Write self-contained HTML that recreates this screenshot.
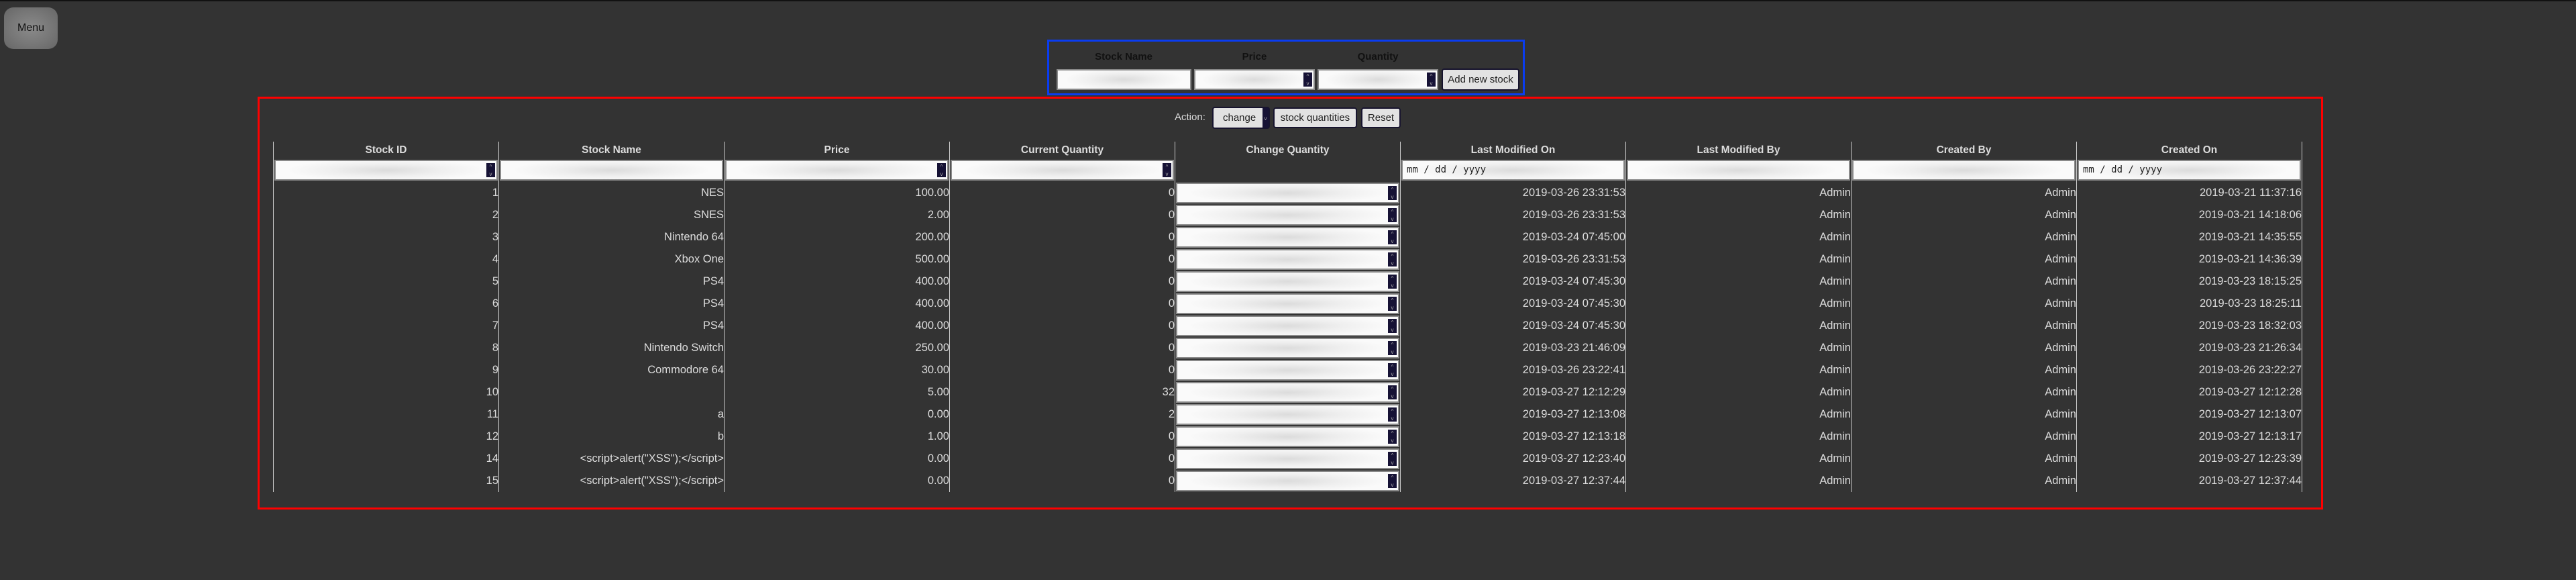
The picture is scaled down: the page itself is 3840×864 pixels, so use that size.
<!DOCTYPE html>
<html><head><meta charset="utf-8"><style>
html,body{margin:0;padding:0;}
body{width:3840px;height:864px;background:#333;position:relative;overflow:hidden;font-family:"Liberation Sans",sans-serif;border-top:2px solid #111;box-sizing:border-box;}
.abs{position:absolute;}
.menu{left:6px;top:9px;width:80px;height:62px;border-radius:14px;background:radial-gradient(ellipse at center,#8a8a8a 0%,#777 55%,#666 100%);color:#111;font-size:16px;display:flex;align-items:center;justify-content:center;}
.blue{left:1561px;top:57px;width:706px;height:77px;border:3px solid #0a3cf0;}
.red{left:384px;top:142px;width:3073px;height:609px;border:3px solid #f00;}
.lbl{color:#111;font-weight:bold;font-size:15px;text-align:center;}
.inp{box-sizing:border-box;border:2px solid #8a8a8a;background:radial-gradient(ellipse 45% 60% at 50% 50%,#dcdcdc 0%,#efefef 55%,#fafafa 100%);}
.spin{position:absolute;right:2px;top:3px;bottom:3px;width:13px;background:#161235;color:#aaa;font-size:8px;line-height:11px;text-align:center;}
.btn{box-sizing:border-box;background:#e2e2e2;border:2px solid #17142e;border-radius:4px;color:#222;font-size:15px;display:flex;align-items:center;justify-content:center;}
table{position:absolute;left:407px;top:209px;border-collapse:collapse;table-layout:fixed;width:3025px;}
col{width:336px;}
td,th{border-left:1px solid #ccc;padding:0;color:#ddd;font-size:16.5px;overflow:hidden;}
tr>*:last-child{border-right:1px solid #ccc;}
th{height:26px;font-weight:bold;font-size:15.5px;color:#ddd;text-align:center;vertical-align:middle;}
tr.f td{height:34px;position:relative;}
tr.f .inp{position:absolute;left:1px;right:1px;top:1px;height:31px;}
tr.d td{height:33px;text-align:right;position:relative;white-space:nowrap;}
tr.d td.c .inp{position:absolute;left:1px;right:1px;top:1px;height:31px;}
.date{font-family:"DejaVu Sans Mono","Liberation Mono",monospace;font-size:14px;color:#222;padding-left:6px;line-height:27px;}
</style></head><body>
<div class="abs menu">Menu</div>

<div class="abs blue"></div>
<div class="abs lbl" style="left:1575px;top:74px;width:200px;">Stock Name</div>
<div class="abs lbl" style="left:1780px;top:74px;width:180px;">Price</div>
<div class="abs lbl" style="left:1964px;top:74px;width:180px;">Quantity</div>
<div class="abs inp" style="left:1575px;top:101px;width:201px;height:31px;"></div>
<div class="abs inp" style="left:1780px;top:101px;width:180px;height:31px;"><div class="spin">^<br>v</div></div>
<div class="abs inp" style="left:1964px;top:101px;width:180px;height:31px;"><div class="spin">^<br>v</div></div>
<div class="abs btn" style="left:2149px;top:100px;width:116px;height:33px;">Add new stock</div>

<div class="abs red"></div>
<div class="abs" style="left:1751px;top:164px;color:#ddd;font-size:15px;">Action:</div>
<div class="abs btn" style="left:1807px;top:157px;width:86px;height:33px;justify-content:flex-start;padding-left:14px;">change<div style="position:absolute;right:0;top:0;bottom:0;width:9px;background:#161235;color:#aaa;font-size:8px;line-height:31px;text-align:center;">v</div></div>
<div class="abs btn" style="left:1898px;top:158px;width:125px;height:31px;">stock quantities</div>
<div class="abs btn" style="left:2029px;top:158px;width:59px;height:31px;">Reset</div>

<table>
<colgroup><col><col><col><col><col><col><col><col><col></colgroup>
<tr><th>Stock ID</th><th>Stock Name</th><th>Price</th><th>Current Quantity</th><th>Change Quantity</th><th>Last Modified On</th><th>Last Modified By</th><th>Created By</th><th>Created On</th></tr>
<tr class="f">
<td><div class="inp"><div class="spin">^<br>v</div></div></td>
<td><div class="inp"></div></td>
<td><div class="inp"><div class="spin">^<br>v</div></div></td>
<td><div class="inp"><div class="spin">^<br>v</div></div></td>
<td></td>
<td><div class="inp date">mm / dd / yyyy</div></td>
<td><div class="inp"></div></td>
<td><div class="inp"></div></td>
<td><div class="inp date">mm / dd / yyyy</div></td>
</tr>
<tr class="d"><td>1</td><td>NES</td><td>100.00</td><td>0</td><td class="c"><div class="inp"><div class="spin">^<br>v</div></div></td><td>2019-03-26 23:31:53</td><td>Admin</td><td>Admin</td><td>2019-03-21 11:37:16</td></tr>
<tr class="d"><td>2</td><td>SNES</td><td>2.00</td><td>0</td><td class="c"><div class="inp"><div class="spin">^<br>v</div></div></td><td>2019-03-26 23:31:53</td><td>Admin</td><td>Admin</td><td>2019-03-21 14:18:06</td></tr>
<tr class="d"><td>3</td><td>Nintendo 64</td><td>200.00</td><td>0</td><td class="c"><div class="inp"><div class="spin">^<br>v</div></div></td><td>2019-03-24 07:45:00</td><td>Admin</td><td>Admin</td><td>2019-03-21 14:35:55</td></tr>
<tr class="d"><td>4</td><td>Xbox One</td><td>500.00</td><td>0</td><td class="c"><div class="inp"><div class="spin">^<br>v</div></div></td><td>2019-03-26 23:31:53</td><td>Admin</td><td>Admin</td><td>2019-03-21 14:36:39</td></tr>
<tr class="d"><td>5</td><td>PS4</td><td>400.00</td><td>0</td><td class="c"><div class="inp"><div class="spin">^<br>v</div></div></td><td>2019-03-24 07:45:30</td><td>Admin</td><td>Admin</td><td>2019-03-23 18:15:25</td></tr>
<tr class="d"><td>6</td><td>PS4</td><td>400.00</td><td>0</td><td class="c"><div class="inp"><div class="spin">^<br>v</div></div></td><td>2019-03-24 07:45:30</td><td>Admin</td><td>Admin</td><td>2019-03-23 18:25:11</td></tr>
<tr class="d"><td>7</td><td>PS4</td><td>400.00</td><td>0</td><td class="c"><div class="inp"><div class="spin">^<br>v</div></div></td><td>2019-03-24 07:45:30</td><td>Admin</td><td>Admin</td><td>2019-03-23 18:32:03</td></tr>
<tr class="d"><td>8</td><td>Nintendo Switch</td><td>250.00</td><td>0</td><td class="c"><div class="inp"><div class="spin">^<br>v</div></div></td><td>2019-03-23 21:46:09</td><td>Admin</td><td>Admin</td><td>2019-03-23 21:26:34</td></tr>
<tr class="d"><td>9</td><td>Commodore 64</td><td>30.00</td><td>0</td><td class="c"><div class="inp"><div class="spin">^<br>v</div></div></td><td>2019-03-26 23:22:41</td><td>Admin</td><td>Admin</td><td>2019-03-26 23:22:27</td></tr>
<tr class="d"><td>10</td><td></td><td>5.00</td><td>32</td><td class="c"><div class="inp"><div class="spin">^<br>v</div></div></td><td>2019-03-27 12:12:29</td><td>Admin</td><td>Admin</td><td>2019-03-27 12:12:28</td></tr>
<tr class="d"><td>11</td><td>a</td><td>0.00</td><td>2</td><td class="c"><div class="inp"><div class="spin">^<br>v</div></div></td><td>2019-03-27 12:13:08</td><td>Admin</td><td>Admin</td><td>2019-03-27 12:13:07</td></tr>
<tr class="d"><td>12</td><td>b</td><td>1.00</td><td>0</td><td class="c"><div class="inp"><div class="spin">^<br>v</div></div></td><td>2019-03-27 12:13:18</td><td>Admin</td><td>Admin</td><td>2019-03-27 12:13:17</td></tr>
<tr class="d"><td>14</td><td>&lt;script&gt;alert("XSS");&lt;/script&gt;</td><td>0.00</td><td>0</td><td class="c"><div class="inp"><div class="spin">^<br>v</div></div></td><td>2019-03-27 12:23:40</td><td>Admin</td><td>Admin</td><td>2019-03-27 12:23:39</td></tr>
<tr class="d"><td>15</td><td>&lt;script&gt;alert("XSS");&lt;/script&gt;</td><td>0.00</td><td>0</td><td class="c"><div class="inp"><div class="spin">^<br>v</div></div></td><td>2019-03-27 12:37:44</td><td>Admin</td><td>Admin</td><td>2019-03-27 12:37:44</td></tr>
</table>
</body></html>
